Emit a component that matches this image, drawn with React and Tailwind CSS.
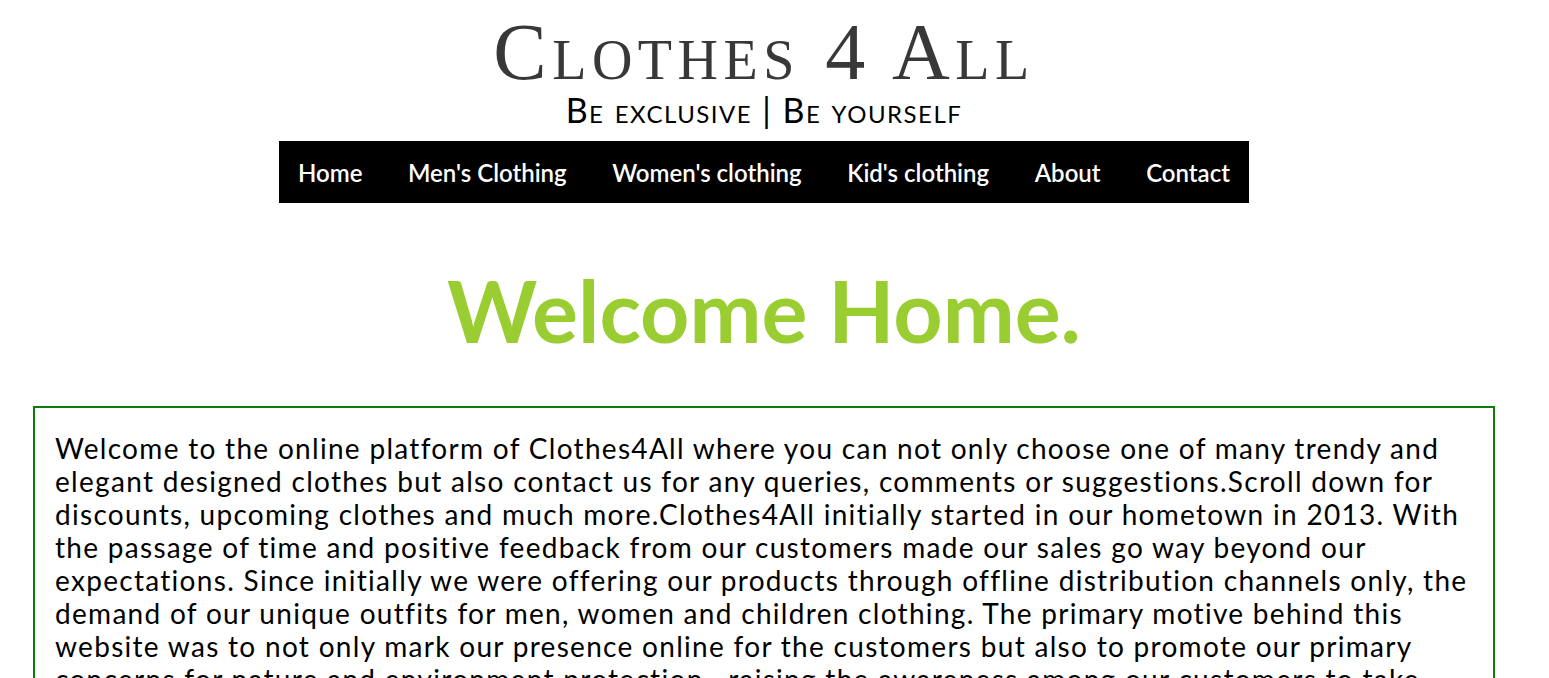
import React from "react";

const links = ["Home", "Men's Clothing", "Women's clothing", "Kid's clothing", "About", "Contact"];

const lines = [
  "Welcome to the online platform of Clothes4All where you can not only choose one of many trendy and",
  "elegant designed clothes but also contact us for any queries, comments or suggestions.Scroll down for",
  "discounts, upcoming clothes and much more.Clothes4All initially started in our hometown in 2013. With",
  "the passage of time and positive feedback from our customers made our sales go way beyond our",
  "expectations. Since initially we were offering our products through offline distribution channels only, the",
  "demand of our unique outfits for men, women and children clothing. The primary motive behind this",
  "website was to not only mark our presence online for the customers but also to promote our primary",
  "concerns for nature and environment protection , raising the awareness among our customers to take",
];

export default function App() {
  return (
    <div className="min-h-screen w-[1528px] bg-white font-['Lato',sans-serif] text-black">
      <header className="flex flex-col items-center pt-[19px]">
        <h1 className="font-['Liberation_Serif',serif] text-[80px] leading-[66px] tracking-[5.5px] text-[#383838] [font-variant:small-caps]">
          Clothes 4 All
        </h1>
        <p className="mt-[6px] text-[34px] leading-[38px] tracking-[1.5px] [font-variant:small-caps]">
          Be exclusive | Be yourself
        </p>
        <nav className="mt-[12px] flex h-[62px] w-[970px] items-center justify-between bg-black px-[19px]">
          {links.map((l) => (
            <a key={l} href="#" className="pt-[2px] text-[24px] font-semibold text-white">
              {l}
            </a>
          ))}
        </nav>
      </header>

      <main>
        <h2 className="mt-[57px] text-center text-[86px] font-bold leading-[100px] text-[#9acd32]">
          Welcome Home.
        </h2>
        <section className="mx-[33px] mt-[46px] border-2 border-[#0a7d0a] px-[20px] pt-[24px] pb-[20px]">
          <p className="text-[28px] leading-[33px] tracking-[1.3px]">
            {lines.map((t, i) => (
              <span key={i} className="block whitespace-nowrap">
                {t}
              </span>
            ))}
          </p>
        </section>
      </main>
    </div>
  );
}
